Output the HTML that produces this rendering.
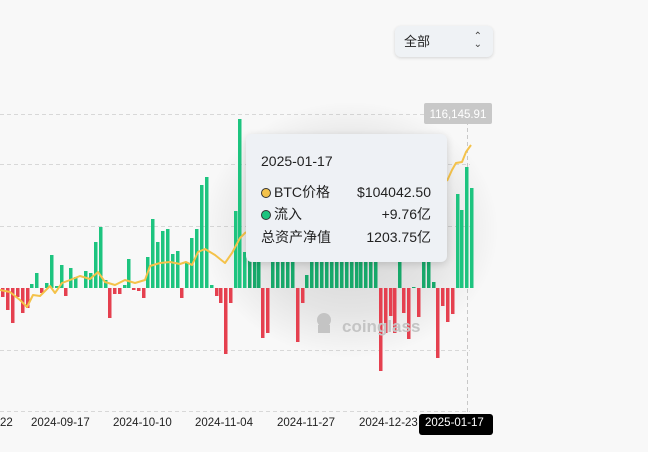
<!DOCTYPE html>
<html><head><meta charset="utf-8"><style>
body{margin:0;width:648px;height:452px;background:#f8f8f8;overflow:hidden;position:relative;font-family:"Liberation Sans","Noto Sans CJK SC",sans-serif;}
.sel{position:absolute;left:395px;top:26px;width:98px;height:31px;box-sizing:border-box;background:#eff2f5;border-radius:6px;box-shadow:0 1px 3px rgba(0,0,0,.15);font-size:13px;color:#222;line-height:31px;padding-left:9px;}
.sel span{position:absolute;right:11px;top:0;font-size:10px;line-height:8px;color:#444;padding-top:7px;text-align:center}
.glow{position:absolute;left:200px;top:100px;width:300px;height:260px;border-radius:50%;background:radial-gradient(ellipse at center,rgba(0,0,0,.16) 0%,rgba(0,0,0,.08) 45%,rgba(0,0,0,0) 70%);}
.tip{position:absolute;left:246px;top:134px;width:201px;height:128px;background:#eef1f5;border-radius:6px;box-shadow:0 2px 8px rgba(0,0,0,.15);font-size:14px;color:#222;}
.row{position:absolute;left:15px;right:16px;height:18px;line-height:18px}
.row b{font-weight:normal;position:absolute;right:0}
.dot{display:inline-block;width:8px;height:8px;border-radius:50%;border:1.5px solid #333;margin-right:3px;vertical-align:-1px}
.xl{position:absolute;top:417px;font-size:11.5px;color:#222;}
</style></head><body>
<div class="sel">全部<span>⌃<br>⌄</span></div>
<svg width="648" height="452" style="position:absolute;left:0;top:0">
<g stroke="#d8d8d8" stroke-dasharray="4,3" stroke-width="1">
<line x1="0" y1="114.5" x2="470" y2="114.5"/><line x1="0" y1="164.5" x2="470" y2="164.5"/><line x1="0" y1="226.5" x2="470" y2="226.5"/><line x1="0" y1="350.5" x2="470" y2="350.5"/><line x1="0" y1="411.5" x2="470" y2="411.5"/>
<line x1="467.5" y1="114" x2="467.5" y2="414" stroke="#c8c8c8"/>
</g>
</svg>
<div class="glow"></div>
<svg width="648" height="452" style="position:absolute;left:0;top:0">
<g fill="#1dc47f">
<rect x="30" y="284" width="3.5" height="4"/><rect x="35" y="273" width="3.5" height="15"/><rect x="45" y="283" width="3.5" height="5"/><rect x="50" y="255" width="3.5" height="33"/><rect x="55" y="286" width="3.5" height="2"/><rect x="60" y="265" width="3.5" height="23"/><rect x="69" y="268" width="3.5" height="20"/><rect x="74" y="277" width="3.5" height="11"/><rect x="84" y="271" width="3.5" height="17"/><rect x="89" y="273" width="3.5" height="15"/><rect x="94" y="242" width="3.5" height="46"/><rect x="99" y="227" width="3.5" height="61"/><rect x="104" y="280" width="3.5" height="8"/><rect x="123" y="285" width="3.5" height="3"/><rect x="127" y="259" width="3.5" height="29"/><rect x="146" y="257" width="3.5" height="31"/><rect x="151" y="219" width="3.5" height="69"/><rect x="156" y="242" width="3.5" height="46"/><rect x="161" y="231" width="3.5" height="57"/><rect x="166" y="229" width="3.5" height="59"/><rect x="171" y="254" width="3.5" height="34"/><rect x="176" y="251" width="3.5" height="37"/><rect x="185" y="263" width="3.5" height="25"/><rect x="190" y="238" width="3.5" height="50"/><rect x="195" y="229" width="3.5" height="59"/><rect x="200" y="185" width="3.5" height="103"/><rect x="205" y="177" width="3.5" height="111"/><rect x="210" y="285" width="3.5" height="3"/><rect x="234" y="211" width="3.5" height="77"/><rect x="238" y="119" width="3.5" height="169"/><rect x="243" y="252" width="3.5" height="36"/>
<g fill="#17a86a"><rect x="248" y="248" width="3.5" height="40"/><rect x="253" y="243" width="3.5" height="45"/><rect x="257" y="248" width="3.5" height="40"/><rect x="271" y="248" width="3.5" height="40"/><rect x="276" y="243" width="3.5" height="45"/><rect x="281" y="248" width="3.5" height="40"/><rect x="286" y="238" width="3.5" height="50"/><rect x="291" y="248" width="3.5" height="40"/><rect x="305" y="275" width="3.5" height="13"/><rect x="310" y="248" width="3.5" height="40"/><rect x="315" y="243" width="3.5" height="45"/><rect x="320" y="248" width="3.5" height="40"/><rect x="325" y="248" width="3.5" height="40"/><rect x="330" y="243" width="3.5" height="45"/><rect x="335" y="248" width="3.5" height="40"/><rect x="340" y="243" width="3.5" height="45"/><rect x="345" y="248" width="3.5" height="40"/><rect x="350" y="248" width="3.5" height="40"/><rect x="355" y="248" width="3.5" height="40"/><rect x="359" y="248" width="3.5" height="40"/><rect x="364" y="248" width="3.5" height="40"/><rect x="369" y="248" width="3.5" height="40"/><rect x="374" y="248" width="3.5" height="40"/><rect x="398" y="248" width="3.5" height="40"/><rect x="412" y="287" width="3.5" height="1"/><rect x="422" y="248" width="3.5" height="40"/><rect x="427" y="248" width="3.5" height="40"/><rect x="432" y="282" width="3.5" height="6"/></g>
<rect x="456" y="194" width="3.5" height="94"/><rect x="460" y="210" width="3.5" height="78"/><rect x="465" y="167" width="3.5" height="121"/><rect x="470" y="188" width="3.5" height="100"/>
</g>
<g fill="#e5404f">
<rect x="1" y="288" width="3.5" height="9"/><rect x="6" y="288" width="3.5" height="22"/><rect x="11" y="288" width="3.5" height="35"/><rect x="16" y="288" width="3.5" height="9"/><rect x="21" y="288" width="3.5" height="25"/><rect x="26" y="288" width="3.5" height="20"/><rect x="40" y="288" width="3.5" height="5"/><rect x="64" y="288" width="3.5" height="8"/><rect x="108" y="288" width="3.5" height="30"/><rect x="113" y="288" width="3.5" height="6"/><rect x="118" y="288" width="3.5" height="6"/><rect x="132" y="288" width="3.5" height="2"/><rect x="137" y="288" width="3.5" height="3"/><rect x="142" y="288" width="3.5" height="10"/><rect x="180" y="288" width="3.5" height="10"/><rect x="215" y="288" width="3.5" height="8"/><rect x="219" y="288" width="3.5" height="15"/><rect x="224" y="288" width="3.5" height="66"/><rect x="229" y="288" width="3.5" height="15"/>
<rect x="261" y="288" width="3.5" height="50"/><rect x="266" y="288" width="3.5" height="45"/><rect x="296" y="288" width="3.5" height="54"/><rect x="301" y="288" width="3.5" height="15"/><rect x="379" y="288" width="3.5" height="83"/><rect x="384" y="288" width="3.5" height="45"/><rect x="389" y="288" width="3.5" height="28"/><rect x="393" y="288" width="3.5" height="45"/><rect x="402" y="288" width="3.5" height="25"/><rect x="407" y="288" width="3.5" height="51"/><rect x="417" y="288" width="3.5" height="29"/><rect x="436" y="288" width="3.5" height="70"/><rect x="441" y="288" width="3.5" height="18"/><rect x="446" y="288" width="3.5" height="34"/><rect x="451" y="288" width="3.5" height="26"/>
</g>
<path d="M0,290 L10,292 L20,300 L27,307 L33,295 L40,296 L50,286 L55,293 L62,283 L70,280 L80,276 L90,279 L98,272 L105,282 L115,285 L125,280 L135,283 L145,280 L150,266 L160,263 L170,262 L180,264 L186,262 L192,265 L198,252 L205,249 L215,255 L225,263 L232,253 L240,238 L246,232" fill="none" stroke="#f4c24a" stroke-width="2" stroke-linejoin="round"/>
<path d="M447,181 L452,170 L456,163 L462,162 L466,152 L471,145" fill="none" stroke="#f4c24a" stroke-width="2" stroke-linejoin="round"/>
<text x="342" y="332" font-family="Liberation Sans, sans-serif" font-size="17" font-weight="bold" fill="#c4c4c4">coinglass</text>
<circle cx="324" cy="320" r="7" fill="#c4c4c4"/><rect x="318" y="325" width="12" height="8" fill="#c4c4c4"/>
<rect x="424" y="103" width="68" height="21" rx="2" fill="#c8c8c8"/>
<text x="458" y="118" font-family="Liberation Sans, sans-serif" font-size="11.5" fill="#fff" text-anchor="middle">116,145.91</text>
<rect x="419" y="414" width="74" height="21" rx="3" fill="#000"/>
</svg>
<div class="xl" style="left:0">22</div>
<div class="xl" style="left:31px">2024-09-17</div>
<div class="xl" style="left:113px">2024-10-10</div>
<div class="xl" style="left:195px">2024-11-04</div>
<div class="xl" style="left:277px">2024-11-27</div>
<div class="xl" style="left:359px">2024-12-23</div>
<div class="xl" style="left:425px;color:#fff">2025-01-17</div>
<div class="tip">
<div class="row" style="top:18px">2025-01-17</div>
<div class="row" style="top:49px"><span class="dot" style="background:#f4c24a"></span>BTC价格<b>$104042.50</b></div>
<div class="row" style="top:71px"><span class="dot" style="background:#1dc47f"></span>流入<b>+9.76亿</b></div>
<div class="row" style="top:94px">总资产净值<b>1203.75亿</b></div>
</div>
</body></html>
